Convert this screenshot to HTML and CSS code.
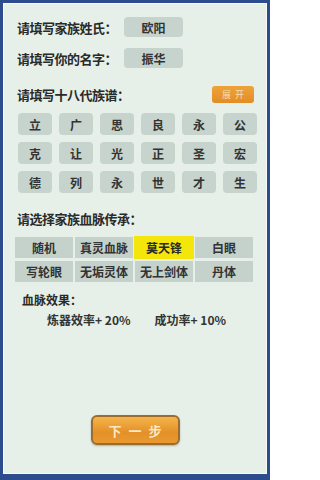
FILE: index.html
```html
<!DOCTYPE html>
<html lang="zh">
<head>
<meta charset="utf-8">
<link rel="stylesheet" href="styles.css">
</head>
<body>
<div class="frame">
  <div class="panel">
    <div class="row row-first">
      <span class="label">请填写家族姓氏：</span>
      <span class="field">欧阳</span>
    </div>
    <div class="row row-second">
      <span class="label">请填写你的名字：</span>
      <span class="field">振华</span>
    </div>
    <div class="row row-third">
      <span class="label">请填写十八代族谱：</span>
      <span class="small-btn">展开</span>
    </div>
    <div class="gen-grid">
      <span class="gen">立</span><span class="gen">广</span><span class="gen">思</span><span class="gen">良</span><span class="gen">永</span><span class="gen">公</span>
      <span class="gen">克</span><span class="gen">让</span><span class="gen">光</span><span class="gen">正</span><span class="gen">圣</span><span class="gen">宏</span>
      <span class="gen">德</span><span class="gen">列</span><span class="gen">永</span><span class="gen">世</span><span class="gen">才</span><span class="gen">生</span>
    </div>
    <div class="section-label">请选择家族血脉传承：</div>
    <div class="blood-grid">
      <span class="blood">随机</span><span class="blood">真灵血脉</span><span class="blood selected">莫天锋</span><span class="blood">白眼</span>
      <span class="blood">写轮眼</span><span class="blood">无垢灵体</span><span class="blood">无上剑体</span><span class="blood">丹体</span>
    </div>
    <div class="effect-label">血脉效果：</div>
    <div class="effects">
      <span class="effect">炼器效率+ 20%</span>
      <span class="effect">成功率+ 10%</span>
    </div>
    <div class="next-wrap">
      <span class="next-btn">下一步</span>
    </div>
  </div>
</div>
</body>
</html>
```

FILE: styles.css
```css
* { box-sizing: border-box; }
html, body {
  margin: 0;
  padding: 0;
  width: 270px;
  height: 480px;
  overflow: hidden;
  font-family: "Noto Sans CJK SC", "Noto Sans", sans-serif;
}
.frame {
  width: 270px;
  height: 480px;
  background: #2c4c8e;
  padding: 3px 3px 6px 3px;
}
.panel {
  height: 100%;
  background: #e6f0e8;
  border: 1px solid #f7fbf8;
  display: flex;
  flex-direction: column;
  padding: 13px 0 0 13px;
  color: #2a2a2a;
}
.row {
  display: flex;
  align-items: center;
  height: 20px;
}
.row-second { margin-top: 11px; }
.row-third { margin-top: 18px; height: 17px; }
.label {
  font-size: 13px;
  font-weight: 700;
  width: 107px;
  white-space: nowrap;
  letter-spacing: -0.5px;
}
.field {
  width: 59px;
  height: 20px;
  background: #c6d4cd;
  border-radius: 4px;
  font-size: 12px;
  font-weight: 700;
  display: flex;
  align-items: center;
  justify-content: center;
  color: #333;
}
.row-third .label { width: 195px; }
.small-btn {
  width: 42px;
  height: 17px;
  background: linear-gradient(#eea43a, #e28c24);
  border-radius: 3px;
  font-size: 9px;
  color: #f8dcb8;
  display: flex;
  align-items: center;
  justify-content: center;
  letter-spacing: 4px;
  padding-left: 4px;
}
.gen-grid {
  margin-top: 10px;
  margin-left: 1px;
  display: grid;
  grid-template-columns: repeat(6, 34px);
  grid-auto-rows: 22px;
  column-gap: 7px;
  row-gap: 7px;
}
.gen {
  background: #c6d4cd;
  border-radius: 4px;
  font-size: 12px;
  font-weight: 700;
  display: flex;
  align-items: center;
  justify-content: center;
  color: #333;
}
.section-label {
  margin-top: 18px;
  font-size: 13px;
  font-weight: 700;
  line-height: 16px;
  letter-spacing: -0.5px;
}
.blood-grid {
  margin-top: 10px;
  margin-left: -2px;
  display: grid;
  grid-template-columns: repeat(4, 58px);
  grid-template-rows: 21px 21px;
  column-gap: 2px;
  row-gap: 3px;
}
.blood {
  background: #c4d2cb;
  font-size: 12px;
  font-weight: 700;
  display: flex;
  align-items: center;
  justify-content: center;
  color: #333;
  white-space: nowrap;
}
.blood.selected {
  background: #f4e60a;
  color: #2a2a2a;
  box-shadow: 0 0 0 1px #f4e60a;
  position: relative;
}
.effect-label {
  margin-top: 11px;
  margin-left: 5px;
  font-size: 12px;
  font-weight: 700;
  line-height: 14px;
}
.effects {
  margin-top: 6px;
  margin-left: 30px;
  display: flex;
  gap: 24px;
  font-size: 12px;
  font-weight: 700;
  line-height: 14px;
  color: #333;
}
.next-wrap {
  margin-top: 88px;
  margin-left: -13px;
  display: flex;
  justify-content: center;
}
.next-btn {
  width: 89px;
  height: 30px;
  background: linear-gradient(#f4b54a, #e49028 60%, #e89a30);
  border: 2px solid #9c6b2e;
  border-radius: 6px;
  color: #fbe8c6;
  font-size: 13px;
  font-weight: 700;
  letter-spacing: 7px;
  padding-left: 7px;
  display: flex;
  align-items: center;
  justify-content: center;
  box-shadow: 0 1px 2px rgba(0,0,0,0.25);
}
```
